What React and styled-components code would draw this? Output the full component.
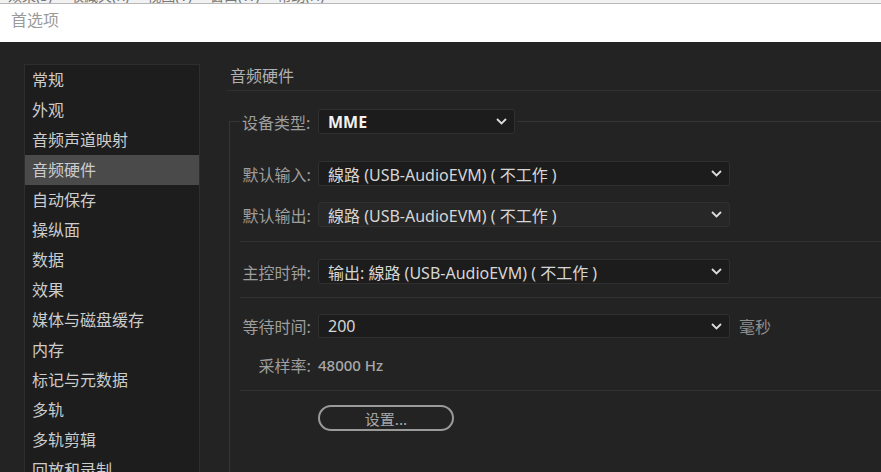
import React from 'react';
import styled, { createGlobalStyle } from 'styled-components';

const GlobalStyle = createGlobalStyle`
  html, body {
    margin: 0;
    padding: 0;
    background: #232323;
  }
  body {
    width: 881px;
    height: 472px;
    overflow: hidden;
    font-family: "Noto Sans", "Noto Sans CJK SC", sans-serif;
  }
`;

const Window = styled.div`
  width: 881px;
  height: 472px;
  display: flex;
  flex-direction: column;
  overflow: hidden;
`;

// menu bar of the app behind the dialog, only its lower edge is visible
const MenuStrip = styled.div`
  height: 3px;
  background: #f2f2f2;
  border-bottom: 1px solid #b8b8b8;
  overflow: hidden;
  display: flex;
  gap: 18px;
  padding-left: 8px;

  span {
    font-size: 14px;
    line-height: 14px;
    margin-top: -11px;
    color: #777;
    white-space: nowrap;
  }
`;

const TitleBar = styled.div`
  height: 38px;
  box-sizing: border-box;
  padding: 0 0 9px 11px;
  background: #ffffff;
  display: flex;
  align-items: center;
  font-size: 16px;
  color: #9a9a9a;
  font-family: "Noto Sans CJK SC", sans-serif;
`;

const Body = styled.div`
  flex: 1;
  display: flex;
  background: #232323;
  min-height: 0;
`;

const Sidebar = styled.ul`
  list-style: none;
  margin: 22px 0 0 24px;
  padding: 0;
  width: 174px;
  background: #1d1d1d;
  border: 1px solid #2e2e2e;
  border-bottom: none;
`;

const NavItem = styled.li`
  height: 30px;
  line-height: 28px;
  padding-left: 7px;
  font-size: 16px;
  color: #cccccc;
  background: ${(p) => (p.$active ? '#4a4a4a' : 'transparent')};
  font-family: "Noto Sans CJK SC", sans-serif;
  white-space: nowrap;
`;

const Main = styled.div`
  flex: 1;
  display: flex;
  flex-direction: column;
  margin-left: 27px;
  min-width: 0;
`;

const SectionTitle = styled.div`
  margin-top: 23px;
  height: 25px;
  line-height: 20px;
  padding-left: 3px;
  font-size: 16px;
  color: #b0b0b0;
  border-bottom: 1px solid #313131;
  font-family: "Noto Sans CJK SC", sans-serif;
`;

const Group = styled.div`
  flex: 1;
  margin: 30px 0 0 2px;
  border-top: 1px solid #363636;
  border-left: 1px solid #363636;
  display: flex;
  flex-direction: column;
`;

const Row = styled.div`
  display: flex;
  align-items: center;
  padding-left: 12px;
  margin-top: ${(p) => p.$top || 0}px;
  height: ${(p) => p.$h || 25}px;
`;

const Legend = styled(Row)`
  margin-top: -13px;
  align-self: flex-start;
  background: #232323;
  padding-right: 2px;
  margin-left: 10px;
  padding-left: 2px;
`;

const Label = styled.span`
  width: 69px;
  margin-right: 7px;
  text-align: ${(p) => (p.$left ? 'left' : 'right')};
  font-size: 16px;
  color: #9e9e9e;
  white-space: nowrap;
  font-family: "Noto Sans CJK SC", sans-serif;
`;

const Select = styled.div`
  box-sizing: border-box;
  width: ${(p) => p.$w || 412}px;
  height: ${(p) => p.$h || 25}px;
  background: ${(p) => (p.$muted ? '#272727' : '#1c1c1c')};
  border: 1px solid #303030;
  border-radius: 3px;
  display: flex;
  align-items: center;
  justify-content: space-between;
  padding: 0 7px 0 9px;
  font-size: 16px;
  color: ${(p) => (p.$bold ? '#f2f2f2' : '#d6d6d6')};
  font-weight: ${(p) => (p.$bold ? 700 : 400)};
  white-space: nowrap;

  svg {
    flex: none;
  }
`;

const Unit = styled.span`
  margin-left: 9px;
  font-size: 16px;
  color: #8e8e8e;
  font-family: "Noto Sans CJK SC", sans-serif;
`;

const Value = styled.span`
  font-size: 15px;
  color: #a8a8a8;
  font-weight: 500;
`;

const Divider = styled.div`
  height: 1px;
  background: #323232;
  margin: ${(p) => p.$top || 0}px 0 0 10px;
`;

const PillButton = styled.button`
  box-sizing: border-box;
  margin: 14px 0 0 88px;
  width: 136px;
  height: 26px;
  border: 2px solid #9a9a9a;
  border-radius: 13px;
  background: transparent;
  color: #a6a6a6;
  font-size: 15px;
  font-family: "Noto Sans CJK SC", sans-serif;
  align-self: flex-start;
  padding: 0;
`;

const Chevron = () => (
  <svg width="11" height="7" viewBox="0 0 11 7">
    <polyline points="1,1 5.5,5.5 10,1" fill="none" stroke="#dcdcdc" strokeWidth="1.8" />
  </svg>
);

const navItems = [
  '常规', '外观', '音频声道映射', '音频硬件', '自动保存', '操纵面', '数据', '效果',
  '媒体与磁盘缓存', '内存', '标记与元数据', '多轨', '多轨剪辑', '回放和录制',
];

const device = '線路 (USB-AudioEVM) ( 不工作 )';

export default function App() {
  return (
    <Window>
      <GlobalStyle />
      <MenuStrip>
        <span>效果(S)</span>
        <span>收藏夹(R)</span>
        <span>视图(V)</span>
        <span>窗口(W)</span>
        <span>帮助(H)</span>
      </MenuStrip>
      <TitleBar>首选项</TitleBar>
      <Body>
        <Sidebar>
          {navItems.map((item) => (
            <NavItem key={item} $active={item === '音频硬件'}>{item}</NavItem>
          ))}
        </Sidebar>
        <Main>
          <SectionTitle>音频硬件</SectionTitle>
          <Group>
            <Legend $h={25}>
              <Label $left style={{ width: 68, marginRight: 8 }}>设备类型:</Label>
              <Select $w={197} $h={25} $bold>
                <span>MME</span>
                <Chevron />
              </Select>
            </Legend>
            <Row $top={27}>
              <Label>默认输入:</Label>
              <Select><span>{device}</span><Chevron /></Select>
            </Row>
            <Row $top={16}>
              <Label>默认输出:</Label>
              <Select $muted><span>{device}</span><Chevron /></Select>
            </Row>
            <Divider $top={14} />
            <Row $top={17}>
              <Label>主控时钟:</Label>
              <Select><span>输出: {device}</span><Chevron /></Select>
            </Row>
            <Divider $top={13} />
            <Row $top={16} $h={24}>
              <Label>等待时间:</Label>
              <Select $h={24}><span>200</span><Chevron /></Select>
              <Unit>毫秒</Unit>
            </Row>
            <Row $top={17} $h={20}>
              <Label>采样率:</Label>
              <Value>48000 Hz</Value>
            </Row>
            <Divider $top={15} />
            <PillButton>设置...</PillButton>
          </Group>
        </Main>
      </Body>
    </Window>
  );
}
